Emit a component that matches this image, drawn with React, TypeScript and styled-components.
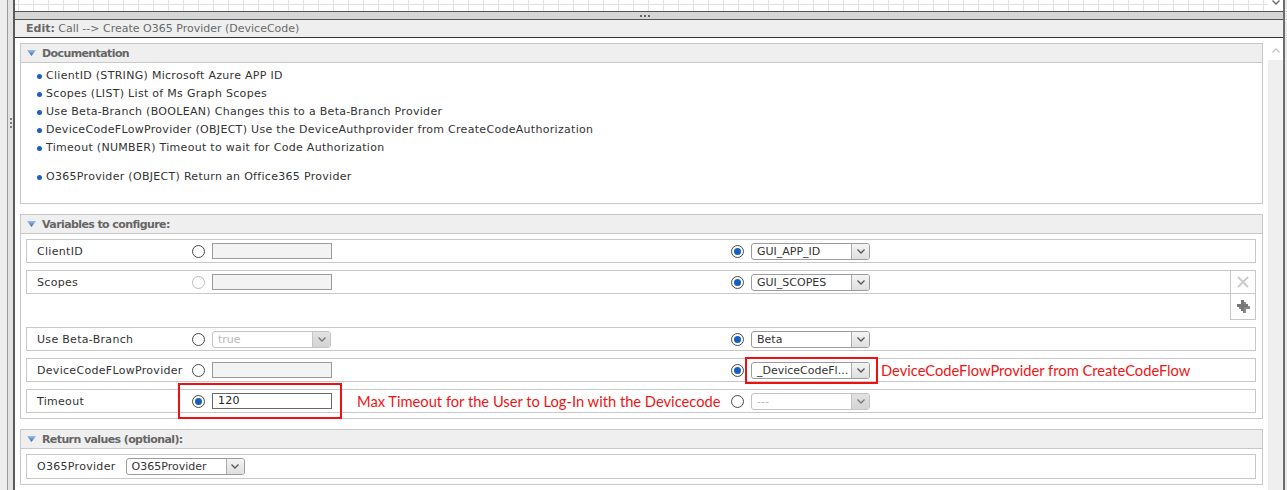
import React from "react";
import styled, { createGlobalStyle } from "styled-components";

const GlobalStyle = createGlobalStyle`
  html, body { margin: 0; padding: 0; }
  body {
    background: #e9e9e9;
    font-family: "DejaVu Sans", Verdana, sans-serif;
    font-size: 11px;
    letter-spacing: 0.3px;
    color: #333;
  }
`;

const Frame = styled.div`
  display: flex;
  width: 1287px;
  height: 490px;
  overflow: hidden;
  padding-right: 2px;
  box-sizing: border-box;
`;

const SideStrip = styled.div`
  flex: 0 0 15px;
  box-sizing: border-box;
  padding: 118px 0 0 10px;
  background: linear-gradient(
    to right,
    #ededed 0 7px,
    #9a9a9a 7px 8px,
    #e3e3e3 8px 13px,
    #5a5a5a 13px 15px
  );
`;

const Grip = styled.div`
  width: 2px;
  height: 10px;
  background: repeating-linear-gradient(to bottom, #7a7a7a 0 2px, transparent 2px 4px);
`;

const Main = styled.div`
  flex: 1;
  display: flex;
  flex-direction: column;
  min-width: 0;
  border-right: 2px solid #6e6e6e;
  background: #fff;
`;

const GridBand = styled.div`
  height: 11px;
  display: flex;
  border-bottom: 1px solid #555;
`;

const GridCanvas = styled.div`
  flex: 1;
  background-color: #fff;
  background-image:
    linear-gradient(to right, #e2e2e2 1px, transparent 1px),
    linear-gradient(to bottom, transparent 4px, #e2e2e2 4px, #e2e2e2 5px, transparent 5px);
  background-size: 15px 100%, 100% 100%;
  background-position: 3px 0, 0 0;
`;

const MiniScroll = styled.div`
  flex: 0 0 15px;
  display: flex;
  justify-content: center;
  align-items: flex-start;
  background: #fff;
`;

const Splitter = styled.div`
  height: 7px;
  background: #d6d6d6;
  border-bottom: 1px solid #555;
  display: flex;
  justify-content: center;
  align-items: center;
`;

const SplitDots = styled.div`
  width: 10px;
  height: 2px;
  margin-left: -8px;
  background: repeating-linear-gradient(to right, #666 0 2px, transparent 2px 4px);
`;

const EditBar = styled.div`
  height: 17px;
  line-height: 17px;
  background: #efefef;
  border-bottom: 1px solid #333;
  padding-left: 11px;
  color: #6a6a6a;
  letter-spacing: 0;
  white-space: nowrap;
  b { font-weight: bold; color: #666; }
`;

const Body = styled.div`
  flex: 1;
  display: flex;
  min-height: 0;
`;

const Scroll = styled.div`
  flex: 1;
  padding: 5px;
  overflow: hidden;
  background: #fff;
  min-width: 0;
`;

const Track = styled.div`
  flex: 0 0 15px;
  display: flex;
  flex-direction: column;
  background: #efefef;
`;

const TrackButton = styled.div`
  height: 20px;
  background: #fff;
  display: flex;
  justify-content: center;
  align-items: center;
  padding-top: 2px;
`;

const Panel = styled.section`
  border: 1px solid #c8c8c8;
  & + & { margin-top: 10px; }
`;

const PanelHeader = styled.div`
  height: 18px;
  background: #efefef;
  border-bottom: 1px solid #c8c8c8;
  display: flex;
  align-items: center;
  gap: 6px;
  padding-left: 6px;
  font-weight: bold;
  letter-spacing: -0.6px;
  color: #666;
`;

const DocBody = styled.div`
  height: 140px;
  box-sizing: border-box;
  padding: 3px 0 0 16px;
  background: #fff;
`;

const DocList = styled.ul`
  list-style: none;
  margin: 0;
  padding: 0;
  & + & { margin-top: 11px; }
`;

const DocItem = styled.li`
  display: flex;
  align-items: center;
  height: 18px;
  gap: 4px;
  color: #333;
  white-space: nowrap;
  &::before {
    content: "";
    width: 5px;
    height: 5px;
    margin-top: 2px;
    border-radius: 50%;
    background: #1d5fbf;
  }
`;

const VarBody = styled.div`
  display: flex;
  flex-direction: column;
  gap: 7px;
  padding: 5px 6px 5px 5px;
`;

const Row = styled.div<{ $actions?: boolean }>`
  height: 24px;
  box-sizing: border-box;
  border: 1px solid #c8c8c8;
  display: grid;
  grid-template-columns: ${(p) => (p.$actions ? "155px 539px 1fr 25px" : "155px 539px 1fr")};
  align-items: center;
  padding-left: 10px;
  white-space: nowrap;
`;

const Label = styled.span`
  color: #333;
`;

const Choice = styled.div`
  display: flex;
  align-items: center;
  gap: 7px;
`;

const Radio = styled.span<{ $checked?: boolean; $disabled?: boolean }>`
  width: 13px;
  height: 13px;
  box-sizing: border-box;
  border-radius: 50%;
  border: 1px solid ${(p) => (p.$disabled ? "#bdbdbd" : "#4a4a4a")};
  background: #fff;
  display: flex;
  align-items: center;
  justify-content: center;
  flex: none;
  &::after {
    content: "";
    width: 7px;
    height: 7px;
    border-radius: 50%;
    background: ${(p) => (p.$checked ? "#1560bf" : "transparent")};
  }
`;

const TextField = styled.span<{ $active?: boolean }>`
  width: 120px;
  height: 16px;
  box-sizing: border-box;
  border: 1px solid ${(p) => (p.$active ? "#6a6a6a" : "#9c9c9c")};
  background: ${(p) => (p.$active ? "#fff" : "#f3f3f3")};
  padding-left: 5px;
  line-height: 14px;
  color: #222;
`;

const SelectBox = styled.span<{ $disabled?: boolean }>`
  width: 119px;
  height: 17px;
  box-sizing: border-box;
  display: flex;
  border: 1px solid ${(p) => (p.$disabled ? "#c4c4c4" : "#9c9c9c")};
  border-radius: 3px;
  background: #fff;
  overflow: hidden;
  flex: none;
`;

const SelectText = styled.span<{ $disabled?: boolean }>`
  flex: 1;
  min-width: 0;
  padding-left: 5px;
  line-height: 15px;
  letter-spacing: 0;
  color: ${(p) => (p.$disabled ? "#b9b9b9" : "#333")};
  white-space: nowrap;
`;

const SelectButton = styled.span<{ $disabled?: boolean }>`
  flex: 0 0 17px;
  border-left: 1px solid ${(p) => (p.$disabled ? "#c4c4c4" : "#acacac")};
  background: ${(p) =>
    p.$disabled ? "linear-gradient(#e2e2e2, #d4d4d4)" : "linear-gradient(#f4f4f4, #dedede)"};
  display: flex;
  align-items: center;
  justify-content: center;
`;

const ActionCell = styled.div`
  align-self: stretch;
  border-left: 1px solid #c8c8c8;
  display: flex;
  align-items: center;
  justify-content: center;
`;

const ListItem = styled.div`
  display: flex;
  flex-direction: column;
  align-items: flex-end;
  & > ${Row} { align-self: stretch; }
`;

const PlusCell = styled.div`
  width: 26px;
  height: 26px;
  box-sizing: border-box;
  border: 1px solid #c8c8c8;
  border-top: none;
  display: flex;
  align-items: center;
  justify-content: center;
`;

const ReturnRow = styled.div`
  height: 25px;
  box-sizing: border-box;
  border: 1px solid #c8c8c8;
  display: flex;
  align-items: center;
  gap: 10px;
  padding-left: 10px;
`;

const Highlight = styled.span<{ $t: number; $r: number; $b: number; $l: number }>`
  position: relative;
  display: flex;
  align-items: center;
  gap: 7px;
  & > i {
    position: absolute;
    top: ${(p) => -p.$t}px;
    right: ${(p) => -p.$r}px;
    bottom: ${(p) => -p.$b}px;
    left: ${(p) => -p.$l}px;
    border: 2px solid #ee1111;
    pointer-events: none;
  }
`;

const Note = styled.span<{ $gap: number }>`
  margin-left: ${(p) => p.$gap}px;
  font-family: Lato, "Liberation Sans", sans-serif;
  font-size: 14.7px;
  letter-spacing: 0;
  color: #f01515;
  white-space: nowrap;
`;

const Chevron = ({ color = "#555", up = false }: { color?: string; up?: boolean }) => (
  <svg width="8" height="5" viewBox="0 0 8 5">
    <polyline
      points={up ? "0.5,4.5 4,1 7.5,4.5" : "0.5,0.5 4,4 7.5,0.5"}
      fill="none"
      stroke={color}
      strokeWidth="1.3"
    />
  </svg>
);

const Triangle = () => (
  <svg width="9" height="6" viewBox="0 0 9 6">
    <defs>
      <linearGradient id="tri" x1="0" y1="0" x2="0" y2="1">
        <stop offset="0" stopColor="#9cc0ea" />
        <stop offset="1" stopColor="#2f66b4" />
      </linearGradient>
    </defs>
    <polygon points="0,0 9,0 4.5,6" fill="url(#tri)" />
  </svg>
);

const Select = ({ value, disabled }: { value: string; disabled?: boolean }) => (
  <SelectBox $disabled={disabled}>
    <SelectText $disabled={disabled}>{value}</SelectText>
    <SelectButton $disabled={disabled}>
      <Chevron color={disabled ? "#777" : "#555"} />
    </SelectButton>
  </SelectBox>
);

const CloseIcon = () => (
  <svg width="12" height="12" viewBox="0 0 12 12">
    <path d="M1 1 L11 11 M11 1 L1 11" stroke="#cdcdcd" strokeWidth="2" />
  </svg>
);

const PlusIcon = () => (
  <svg width="13" height="13" viewBox="0 0 13 13">
    <path d="M5 1 h3 v4 h4 v3 h-4 v4 h-3 v-4 h-4 v-3 h4 z" fill="#3a3a3a" transform="translate(1 1)" opacity="0.6" />
    <path d="M4 0 h3 v4 h4 v3 h-4 v4 h-3 v-4 h-4 v-3 h4 z" fill="#777" />
  </svg>
);

const docs = [
  "ClientID (STRING) Microsoft Azure APP ID",
  "Scopes (LIST) List of Ms Graph Scopes",
  "Use Beta-Branch (BOOLEAN) Changes this to a Beta-Branch Provider",
  "DeviceCodeFLowProvider (OBJECT) Use the DeviceAuthprovider from CreateCodeAuthorization",
  "Timeout (NUMBER) Timeout to wait for Code Authorization",
];

export default function App() {
  return (
    <>
      <GlobalStyle />
      <Frame>
        <SideStrip>
          <Grip />
        </SideStrip>
        <Main>
          <GridBand>
            <GridCanvas />
            <MiniScroll>
              <Chevron color="#666" />
            </MiniScroll>
          </GridBand>
          <Splitter>
            <SplitDots />
          </Splitter>
          <EditBar>
            <b>Edit:</b> Call --&gt; Create O365 Provider (DeviceCode)
          </EditBar>
          <Body>
            <Scroll>
              <Panel>
                <PanelHeader>
                  <Triangle />
                  Documentation
                </PanelHeader>
                <DocBody>
                  <DocList>
                    {docs.map((d) => (
                      <DocItem key={d}>{d}</DocItem>
                    ))}
                  </DocList>
                  <DocList>
                    <DocItem>O365Provider (OBJECT) Return an Office365 Provider</DocItem>
                  </DocList>
                </DocBody>
              </Panel>

              <Panel>
                <PanelHeader>
                  <Triangle />
                  Variables to configure:
                </PanelHeader>
                <VarBody>
                  <Row>
                    <Label>ClientID</Label>
                    <Choice>
                      <Radio />
                      <TextField />
                    </Choice>
                    <Choice>
                      <Radio $checked />
                      <Select value="GUI_APP_ID" />
                    </Choice>
                  </Row>

                  <ListItem>
                    <Row $actions>
                      <Label>Scopes</Label>
                      <Choice>
                        <Radio $disabled />
                        <TextField />
                      </Choice>
                      <Choice>
                        <Radio $checked />
                        <Select value="GUI_SCOPES" />
                      </Choice>
                      <ActionCell>
                        <CloseIcon />
                      </ActionCell>
                    </Row>
                    <PlusCell>
                      <PlusIcon />
                    </PlusCell>
                  </ListItem>

                  <Row>
                    <Label>Use Beta-Branch</Label>
                    <Choice>
                      <Radio />
                      <Select value="true" disabled />
                    </Choice>
                    <Choice>
                      <Radio $checked />
                      <Select value="Beta" />
                    </Choice>
                  </Row>

                  <Row>
                    <Label>DeviceCodeFLowProvider</Label>
                    <Choice>
                      <Radio />
                      <TextField />
                    </Choice>
                    <Choice>
                      <Radio $checked />
                      <Highlight $t={5} $r={8} $b={5} $l={6}>
                        <Select value="_DeviceCodeFl..." />
                        <i />
                      </Highlight>
                      <Note $gap={4}>DeviceCodeFlowProvider from CreateCodeFlow</Note>
                    </Choice>
                  </Row>

                  <Row>
                    <Label>Timeout</Label>
                    <Choice>
                      <Highlight $t={10} $r={10} $b={10} $l={14}>
                        <Radio $checked />
                        <TextField $active>120</TextField>
                        <i />
                      </Highlight>
                      <Note $gap={18}>Max Timeout for the User to Log-In with the Devicecode</Note>
                    </Choice>
                    <Choice>
                      <Radio />
                      <Select value="---" disabled />
                    </Choice>
                  </Row>
                </VarBody>
              </Panel>

              <Panel>
                <PanelHeader>
                  <Triangle />
                  Return values (optional):
                </PanelHeader>
                <VarBody>
                  <ReturnRow>
                    <Label>O365Provider</Label>
                    <Select value="O365Provider" />
                  </ReturnRow>
                </VarBody>
              </Panel>
            </Scroll>
            <Track>
              <TrackButton>
                <Chevron color="#c4c4c4" up />
              </TrackButton>
            </Track>
          </Body>
        </Main>
      </Frame>
    </>
  );
}
